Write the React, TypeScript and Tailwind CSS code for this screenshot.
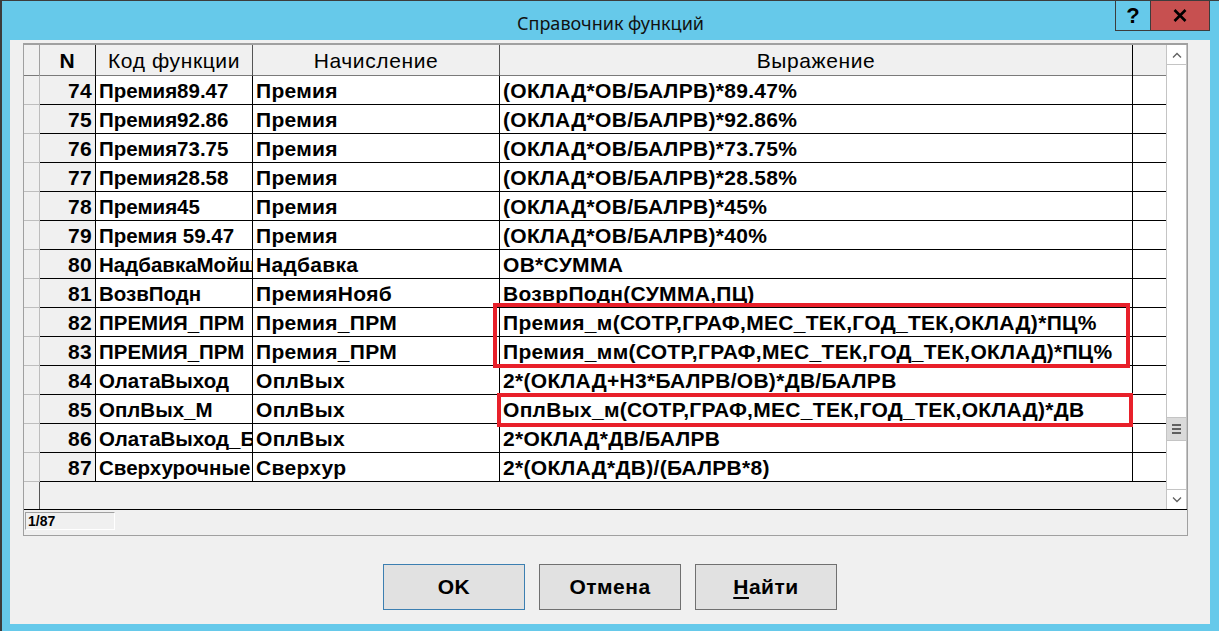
import React from 'react';

const rows: [string, string, string, string][] = [
  ['74', 'Премия89.47', 'Премия', '(ОКЛАД*ОВ/БАЛРВ)*89.47%'],
  ['75', 'Премия92.86', 'Премия', '(ОКЛАД*ОВ/БАЛРВ)*92.86%'],
  ['76', 'Премия73.75', 'Премия', '(ОКЛАД*ОВ/БАЛРВ)*73.75%'],
  ['77', 'Премия28.58', 'Премия', '(ОКЛАД*ОВ/БАЛРВ)*28.58%'],
  ['78', 'Премия45', 'Премия', '(ОКЛАД*ОВ/БАЛРВ)*45%'],
  ['79', 'Премия 59.47', 'Премия', '(ОКЛАД*ОВ/БАЛРВ)*40%'],
  ['80', 'НадбавкаМойщ', 'Надбавка', 'ОВ*СУММА'],
  ['81', 'ВозвПодн', 'ПремияНояб', 'ВозврПодн(СУММА,ПЦ)'],
  ['82', 'ПРЕМИЯ_ПРМ', 'Премия_ПРМ', 'Премия_м(СОТР,ГРАФ,МЕС_ТЕК,ГОД_ТЕК,ОКЛАД)*ПЦ%'],
  ['83', 'ПРЕМИЯ_ПРМ', 'Премия_ПРМ', 'Премия_мм(СОТР,ГРАФ,МЕС_ТЕК,ГОД_ТЕК,ОКЛАД)*ПЦ%'],
  ['84', 'ОлатаВыход', 'ОплВых', '2*(ОКЛАД+Н3*БАЛРВ/ОВ)*ДВ/БАЛРВ'],
  ['85', 'ОплВых_М', 'ОплВых', 'ОплВых_м(СОТР,ГРАФ,МЕС_ТЕК,ГОД_ТЕК,ОКЛАД)*ДВ'],
  ['86', 'ОлатаВыход_Б', 'ОплВых', '2*ОКЛАД*ДВ/БАЛРВ'],
  ['87', 'Сверхурочные', 'Сверхур', '2*(ОКЛАД*ДВ)/(БАЛРВ*8)'],
];

const cols = 'grid grid-cols-[16px_56px_157px_247px_633px_33px]';

const ScrollBar = () => (
  <div className="w-[21px] flex flex-col bg-white border-l border-r border-[#c4c4c4]">
    <div className="h-[20px] border-b border-[#c4c4c4] flex items-center justify-center">
      <svg width="10" height="6" viewBox="0 0 10 6">
        <path d="M1 5.5 L5 1.5 L9 5.5" stroke="#606060" strokeWidth="1.3" fill="none" />
      </svg>
    </div>
    <div className="flex-1 flex flex-col">
      <div className="h-[352px]" />
      <div className="h-[24px] bg-[#dadada] border-y border-[#c4c4c4] flex flex-col items-center justify-center gap-[2px]">
        <div className="w-[9px] h-[2px] bg-[#606060]" />
        <div className="w-[9px] h-[2px] bg-[#606060]" />
        <div className="w-[9px] h-[2px] bg-[#606060]" />
      </div>
      <div className="flex-1" />
    </div>
    <div className="h-[20px] border-t border-[#c4c4c4] flex items-center justify-center">
      <svg width="10" height="6" viewBox="0 0 10 6">
        <path d="M1 0.5 L5 4.5 L9 0.5" stroke="#606060" strokeWidth="1.3" fill="none" />
      </svg>
    </div>
  </div>
);

const App: React.FC = () => {
  return (
    <div
      className="w-[1219px] h-[631px] bg-[#66c9ea] border-l-2 border-t border-[#3c3c3c] flex flex-col text-black overflow-hidden"
      style={{ fontFamily: '"Liberation Sans", Arial, sans-serif' }}
    >
      {/* title bar */}
      <div className="h-[39px] grid grid-cols-[1fr_auto_1fr]">
        <div />
        <div className="pt-[9px] text-[18px] text-[#111]" style={{ fontFamily: '"Noto Sans", sans-serif' }}>
          Справочник функций
        </div>
        <div className="flex justify-end items-start pr-[9px]">
          <div className="w-[36px] h-[30px] border border-t-0 border-[#3c3c3c] flex items-center justify-center text-[22px] font-bold leading-none">
            ?
          </div>
          <div className="w-[59px] h-[30px] bg-[#c75050] border border-l-0 border-t-0 border-[#3c3c3c] flex items-center justify-center">
            <svg width="14" height="13" viewBox="0 0 14 13">
              <path d="M1.5 1 L12.5 12 M12.5 1 L1.5 12" stroke="#000" strokeWidth="2.6" />
            </svg>
          </div>
        </div>
      </div>

      {/* client */}
      <div className="ml-[8px] mr-[9px] flex-1 bg-[#f0f0f0] flex flex-col pt-[3px] pl-[13px] pr-[21px]">
        <div className="w-[1165px] h-[493px] border-t-2 border-[#a0a0a0] border-l border-r border-b border-l-[#a0a0a0] border-r-[#a0a0a0] border-b-[#a0a0a0] flex flex-col">
          <div className="flex h-[465px] border-b border-black">
            <div className="relative w-[1142px] flex flex-col">
              {/* header */}
              <div className={`${cols} h-[31px] bg-[#f0f0f0] border-b border-[#7a7a7a] text-[21px] tracking-[0.6px]`}>
                <div className="border-r border-[#a0a0a0]" />
                <div className="border-r border-[#222] flex items-center justify-center font-bold">N</div>
                <div className="border-r border-[#555] flex items-center justify-center">Код функции</div>
                <div className="border-r border-[#555] flex items-center justify-center">Начисление</div>
                <div className="border-r border-black flex items-center justify-center">Выражение</div>
                <div />
              </div>
              {rows.map(([n, code, accr, expr]) => (
                <div key={n} className={`${cols} h-[29px] text-[21px] tracking-[0.3px] font-bold leading-none`}>
                  <div className="bg-[#f0f0f0] border-r border-[#555] border-b border-[#bdbdbd]" />
                  <div className="bg-[#f0f0f0] border-r border-b border-black flex items-center justify-end pr-[3px]">{n}</div>
                  <div className="bg-white border-r border-b border-black flex items-center pl-[3px] pt-[2px] overflow-hidden whitespace-nowrap text-[20.5px] tracking-normal">{code}</div>
                  <div className="bg-white border-r border-b border-black flex items-center pl-[3px] overflow-hidden whitespace-nowrap">{accr}</div>
                  <div className="bg-white border-r border-b border-black flex items-center pl-[3px] overflow-hidden whitespace-nowrap">{expr}</div>
                  <div className="bg-white border-b border-black" />
                </div>
              ))}
              <div className="flex-1 flex">
                <div className="w-[16px] border-r border-[#555] bg-[#f0f0f0]" />
              </div>

              {/* highlight frames */}
              <div className="absolute left-[469px] top-[258px] w-[637px] h-[65px] border-4 border-[#e8202a]" />
              <div className="absolute left-[473px] top-[348px] w-[636px] h-[34px] border-4 border-[#e8202a]" />
            </div>
            <ScrollBar />
          </div>
          {/* status */}
          <div className="flex-1 flex items-start pt-[2px] pl-[1px]">
            <div className="w-[90px] h-[18px] border border-t-[#a0a0a0] border-l-[#a0a0a0] border-r-white border-b-white pl-[2px] text-[14px] font-bold leading-[16px]">
              1/87
            </div>
          </div>
        </div>

        <div className="flex justify-center gap-[14px] mt-[28px] -ml-[13px] -mr-[21px]">
          <button className="w-[142px] h-[46px] bg-[#e1e1e1] border border-[#3c7fb1] text-[21px] tracking-[0.5px] font-bold">OK</button>
          <button className="w-[142px] h-[46px] bg-[#e1e1e1] border border-[#707070] text-[21px] tracking-[0.5px] font-bold">Отмена</button>
          <button className="w-[142px] h-[46px] bg-[#e1e1e1] border border-[#707070] text-[21px] tracking-[0.5px] font-bold">
            <span className="underline underline-offset-[3px]">Н</span>айти
          </button>
        </div>
      </div>
      <div className="h-[7px]" />
    </div>
  );
};

export default App;
